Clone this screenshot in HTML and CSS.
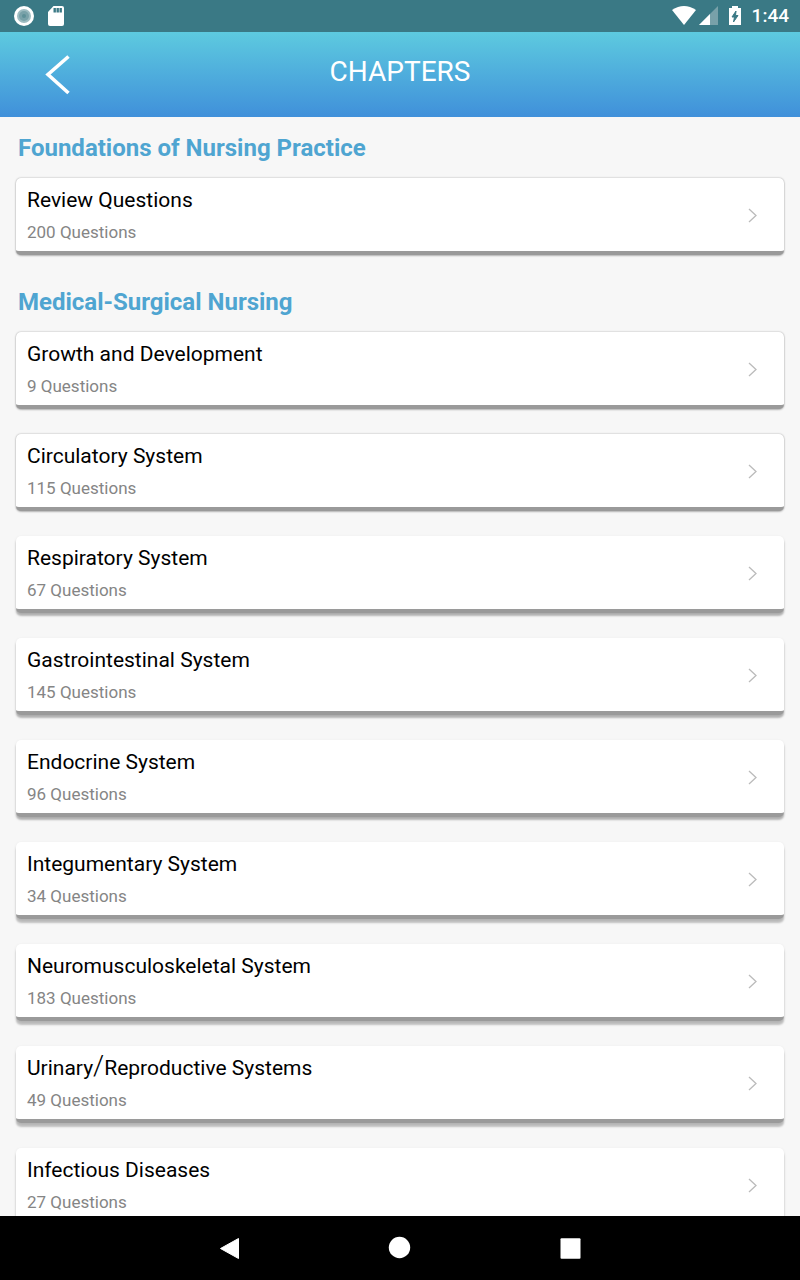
FILE: index.html
```html
<!DOCTYPE html>
<html lang="en">
<head>
<meta charset="utf-8">
<meta name="viewport" content="width=device-width, initial-scale=1">
<title>Chapters</title>
<link rel="stylesheet" href="styles.css">
</head>
<body>
<div class="statusbar">
  <svg width="20" height="20" viewBox="0 0 20 20"><circle cx="10" cy="10" r="10" fill="#fff"/><circle cx="10" cy="10" r="7" fill="#9dbcc1"/><circle cx="10" cy="10" r="5" fill="#79a2a9"/><circle cx="10" cy="10" r="2" fill="#5e9098"/></svg>
  <svg class="sdcard" width="16" height="20" viewBox="0 0 16 20"><path d="M5.500 0H14a2 2 0 0 1 2 2V18a2 2 0 0 1-2 2H2a2 2 0 0 1-2-2V6z" fill="#fff"/><path d="M5.500 2h2.400v4.500H5.500zM8.500 2h2.400v4.500H8.500zM11.500 2h2.400v4.500h-2.400z" fill="#3a7985"/></svg>
  <div class="status-right">
    <svg width="24" height="19" viewBox="0 0 24 19"><path d="M0 4Q12-4 24 4L12 19z" fill="#fff"/></svg>
    <svg class="signal" width="19" height="19" viewBox="0 0 19 19"><path d="M0 19L19 0V19z" fill="#78a1a9"/><path d="M0 19L11 8V19z" fill="#fff"/></svg>
    <svg class="battery" width="12" height="19" viewBox="0 0 12 19"><path d="M3 0h6v2h3v17H0V2h3z" fill="#fff"/><path d="M7 5L3 11h2.500L4.500 16 9 9.500H6.500z" fill="#3a7985" stroke="#3a7985"/></svg>
    <span class="clock">1:44</span>
  </div>
</div>

<header class="topbar">
  <button class="back" aria-label="Back"><svg width="24" height="40" viewBox="0 0 24 40"><path d="M22.500 1.500L2 19.500l20.500 18.500" fill="none" stroke="#fff" stroke-width="3.600"/></svg></button>
  <h1>CHAPTERS</h1>
</header>

<main class="chapters">
  <h2>Foundations of Nursing Practice</h2>
  <a class="card near" href="#">
    <span class="info"><span class="name">Review Questions</span><span class="count">200 Questions</span></span>
    <svg class="arrow" viewBox="0 0 9 15"><path d="M1 1l7 6.500L1 14"/></svg>
  </a>

  <h2>Medical-Surgical Nursing</h2>
  <a class="card near" href="#">
    <span class="info"><span class="name">Growth and Development</span><span class="count">9 Questions</span></span>
    <svg class="arrow" viewBox="0 0 9 15"><path d="M1 1l7 6.500L1 14"/></svg>
  </a>
  <a class="card near" href="#">
    <span class="info"><span class="name">Circulatory System</span><span class="count">115 Questions</span></span>
    <svg class="arrow" viewBox="0 0 9 15"><path d="M1 1l7 6.500L1 14"/></svg>
  </a>
  <a class="card mid" href="#">
    <span class="info"><span class="name">Respiratory System</span><span class="count">67 Questions</span></span>
    <svg class="arrow" viewBox="0 0 9 15"><path d="M1 1l7 6.500L1 14"/></svg>
  </a>
  <a class="card mid" href="#">
    <span class="info"><span class="name">Gastrointestinal System</span><span class="count">145 Questions</span></span>
    <svg class="arrow" viewBox="0 0 9 15"><path d="M1 1l7 6.500L1 14"/></svg>
  </a>
  <a class="card mid" href="#">
    <span class="info"><span class="name">Endocrine System</span><span class="count">96 Questions</span></span>
    <svg class="arrow" viewBox="0 0 9 15"><path d="M1 1l7 6.500L1 14"/></svg>
  </a>
  <a class="card far" href="#">
    <span class="info"><span class="name">Integumentary System</span><span class="count">34 Questions</span></span>
    <svg class="arrow" viewBox="0 0 9 15"><path d="M1 1l7 6.500L1 14"/></svg>
  </a>
  <a class="card far" href="#">
    <span class="info"><span class="name">Neuromusculoskeletal System</span><span class="count">183 Questions</span></span>
    <svg class="arrow" viewBox="0 0 9 15"><path d="M1 1l7 6.500L1 14"/></svg>
  </a>
  <a class="card far" href="#">
    <span class="info"><span class="name">Urinary<span class="slash">/</span>Reproductive Systems</span><span class="count">49 Questions</span></span>
    <svg class="arrow" viewBox="0 0 9 15"><path d="M1 1l7 6.500L1 14"/></svg>
  </a>
  <a class="card far" href="#">
    <span class="info"><span class="name">Infectious Diseases</span><span class="count">27 Questions</span></span>
    <svg class="arrow" viewBox="0 0 9 15"><path d="M1 1l7 6.500L1 14"/></svg>
  </a>
</main>

<nav class="navbar">
  <button aria-label="Back"><svg width="22" height="22" viewBox="0 0 22 22"><path d="M2.500 11.500L20.500 1.500V21.500z" stroke="#fff" stroke-linejoin="round"/></svg></button>
  <button aria-label="Home"><svg width="22" height="22" viewBox="0 0 22 22"><circle cx="10.500" cy="10.500" r="10.700"/></svg></button>
  <button aria-label="Recent apps"><svg width="22" height="22" viewBox="0 0 22 22"><rect x="0.500" y="1.300" width="20" height="20.400" rx="1"/></svg></button>
</nav>
</body>
</html>
```
FILE: styles.css
```css
*
{
  box-sizing: border-box;
}
body
{
  margin: 0;
  height: 100vh;
  display: flex;
  flex-direction: column;
  font-family: Roboto, sans-serif;
  background: #f7f7f7;
}
svg
{
  display: block;
  overflow: visible;
}
button
{
  background: none;
  border: 0;
  padding: 0;
}

/* system bar */
.statusbar
{
  display: flex;
  align-items: center;
  flex: none;
  height: 32px;
  padding: 0 11px 0 14px;
  background: #3a7985;
  color: #fff;
}
.sdcard
{
  margin-left: 14px;
}
.status-right
{
  display: flex;
  align-items: center;
  margin-left: auto;
  padding-bottom: 1px;
}
.signal
{
  margin-left: 3px;
}
.battery
{
  margin-left: 11px;
}
.clock
{
  margin-left: 11px;
  font-size: 19px;
  font-weight: 500;
}

.topbar
{
  display: grid;
  grid-template-columns: 1fr auto 1fr;
  align-items: center;
  flex: none;
  height: 85px;
  padding: 0 46px;
  background: linear-gradient(#5dcadf, #4090da);
  color: #fff;
}
.back
{
  justify-self: start;
}
.topbar h1
{
  margin: 0;
  padding-bottom: 6px;
  font-size: 28px;
  font-weight: 400;
}

/* chapter list */
.chapters
{
  flex: 1;
  min-height: 0;
  overflow: hidden;
  padding: 9px 16px 0;
}
.chapters h2
{
  margin: 0 0 15px;
  padding: 7px 0 0 2px;
  font-size: 24px;
  line-height: 30px;
  color: #4fa5d1;
}
.card
{
  display: flex;
  align-items: center;
  height: 77px;
  margin-bottom: 25px;
  padding: 2px 27px 0 11px;
  border-bottom: 4px solid #9a9a9a;
  border-radius: 5px;
  background: #fff;
  text-decoration: none;
}
.near
{
  box-shadow: 0 0 2px rgba(0,0,0,0.3), 0 1px 2px rgba(0,0,0,0.2);
}
.mid
{
  box-shadow: 0 3px 2px rgba(0,0,0,0.25), 0 1px 3px rgba(0,0,0,0.1);
}
.far
{
  box-shadow: 0 4px 2px rgba(0,0,0,0.22), 0 1px 3px rgba(0,0,0,0.1);
}
.info
{
  flex: 1;
}
.name, .count
{
  display: block;
}
.name
{
  font-size: 21px;
  line-height: 32px;
  color: #000;
}
.slash
{
  font-size: 28px;
  font-weight: 300;
  line-height: 0;
}
.count
{
  font-size: 17px;
  line-height: 32px;
  color: #858585;
}
.arrow
{
  width: 9px;
  height: 15px;
  fill: none;
  stroke: #bbb;
  stroke-width: 1.3;
}

/* bottom buttons */
.navbar
{
  display: flex;
  justify-content: center;
  align-items: center;
  flex: none;
  gap: 149px;
  height: 64px;
  background: #000;
}
.navbar svg
{
  fill: #fff;
}
```
